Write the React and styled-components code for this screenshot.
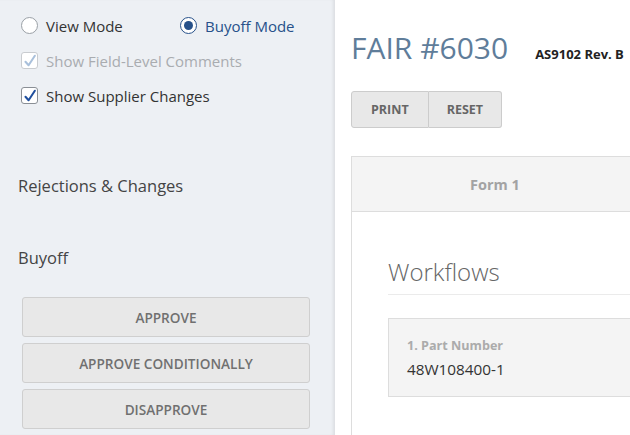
import React from 'react';
import styled, { createGlobalStyle } from 'styled-components';

const GlobalStyle = createGlobalStyle`
  html, body {
    margin: 0;
    padding: 0;
    overflow: hidden;
    background: #fff;
    font-family: "Open Sans", "Noto Sans", sans-serif;
  }
`;

const Page = styled.div`
  display: flex;
  width: 630px;
  height: 435px;
  overflow: hidden;
`;

const Sidebar = styled.aside`
  flex: 0 0 334px;
  background: #edf0f4;
  box-shadow: inset -3px 0 3px -1px rgba(0, 0, 0, 0.07);
  padding: 8px 25px 0 21px;
  box-sizing: border-box;
  color: #333;
`;

const Row = styled.div`
  display: flex;
  align-items: center;
  height: 35px;
`;

const Option = styled.label`
  display: flex;
  align-items: center;
  gap: 8px;
  width: ${(p) => p.width || 'auto'};
  font-size: 15px;
  color: ${(p) => (p.disabled ? '#a9acb0' : p.active ? '#27518a' : '#333')};
`;

const RadioDot = styled.span`
  box-sizing: border-box;
  width: 17px;
  height: 17px;
  border-radius: 50%;
  background: #fff;
  border: 1.5px solid ${(p) => (p.checked ? '#27518a' : '#9aa0a6')};
  display: flex;
  align-items: center;
  justify-content: center;

  &::after {
    content: '';
    display: ${(p) => (p.checked ? 'block' : 'none')};
    width: 9px;
    height: 9px;
    border-radius: 50%;
    background: #27518a;
  }
`;

const Box = styled.span`
  box-sizing: border-box;
  width: 17px;
  height: 17px;
  border-radius: 3px;
  background: #fff;
  border: 1px solid ${(p) => (p.disabled ? '#c9ccd0' : '#8a8f95')};
  display: flex;
  align-items: center;
  justify-content: center;
`;

const SectionLabel = styled.div`
  font-size: 16.5px;
  color: #444;
  line-height: 40px;
  margin-left: -3px;
  margin-top: ${(p) => p.top}px;
`;

const ActionStack = styled.div`
  display: flex;
  flex-direction: column;
  gap: 6px;
  margin-top: 19px;
  margin-left: 1px;
`;

const ActionButton = styled.button`
  height: 40px;
  width: 288px;
  box-sizing: border-box;
  background: #e8e8e8;
  border: 1px solid #cfcfcf;
  border-radius: 3px;
  font-family: "Open Sans", sans-serif;
  font-size: 13.6px;
  font-weight: 600;
  color: #707070;
  padding: 0;
`;

const Main = styled.main`
  flex: 1;
  padding: 25px 0 0 16px;
  min-width: 0;
`;

const TitleRow = styled.div`
  display: flex;
  align-items: baseline;
  gap: 27px;
  height: 46px;
  line-height: 46px;
  white-space: nowrap;
`;

const Title = styled.h1`
  margin: 0;
  font-size: 30px;
  font-weight: 400;
  color: #5f7d9a;
`;

const Standard = styled.span`
  font-size: 13px;
  font-weight: 700;
  color: #222;
`;

const Toolbar = styled.div`
  display: flex;
  margin-top: 20px;
`;

const ToolButton = styled.button`
  height: 37px;
  padding: 0 ${(p) => p.pad}px;
  background: #e8e8e8;
  border: 1px solid #cccccc;
  border-left-width: ${(p) => (p.joined ? 0 : 1)}px;
  border-radius: ${(p) => (p.joined ? '0 3px 3px 0' : '3px 0 0 3px')};
  font-family: "Open Sans", sans-serif;
  font-size: 12.5px;
  font-weight: 700;
  color: #666;
`;

const Panel = styled.section`
  margin-top: 28px;
  border: 1px solid #dddddd;
  border-right: none;
  height: 400px;
`;

const Tabs = styled.div`
  display: flex;
  height: 54px;
  background: #f4f4f4;
  border-bottom: 1px solid #dddddd;
`;

const Tab = styled.div`
  flex: 0 0 286px;
  display: flex;
  align-items: center;
  justify-content: center;
  font-size: 14.5px;
  font-weight: 700;
  color: #a3a3a3;
`;

const PanelBody = styled.div`
  padding: 47px 0 0 36px;
`;

const SectionTitle = styled.h2`
  margin: 0;
  font-size: 24px;
  font-weight: 300;
  line-height: 26px;
  color: #666;
  padding-bottom: 9px;
  border-bottom: 1px solid #ebebeb;
`;

const Field = styled.div`
  margin-top: 23px;
  height: 79px;
  box-sizing: border-box;
  background: #f4f4f4;
  border: 1px solid #dddddd;
  border-right: none;
  padding: 17px 0 0 18px;
`;

const FieldLabel = styled.div`
  font-size: 12.6px;
  font-weight: 700;
  color: #ababab;
  line-height: 20px;
`;

const FieldValue = styled.div`
  font-size: 15.3px;
  color: #333;
  line-height: 24px;
  margin-top: 1px;
`;

const Check = ({ color }) => (
  <svg width="14" height="14" viewBox="0 0 13 13">
    <path d="M2.3 7.2 L5.2 10.4 L11 1.6" fill="none" stroke={color} strokeWidth="1.9" strokeLinecap="round" strokeLinejoin="round" />
  </svg>
);

export default function App() {
  return (
    <Page>
      <GlobalStyle />
      <Sidebar>
        <Row>
          <Option width="159px">
            <RadioDot />
            View Mode
          </Option>
          <Option active>
            <RadioDot checked />
            Buyoff Mode
          </Option>
        </Row>
        <Row>
          <Option disabled>
            <Box disabled>
              <Check color="#a9c0db" />
            </Box>
            Show Field-Level Comments
          </Option>
        </Row>
        <Row>
          <Option>
            <Box>
              <Check color="#1f4f9e" />
            </Box>
            Show Supplier Changes
          </Option>
        </Row>
        <SectionLabel top={53}>Rejections &amp; Changes</SectionLabel>
        <SectionLabel top={32}>Buyoff</SectionLabel>
        <ActionStack>
          <ActionButton>APPROVE</ActionButton>
          <ActionButton>APPROVE CONDITIONALLY</ActionButton>
          <ActionButton>DISAPPROVE</ActionButton>
        </ActionStack>
      </Sidebar>
      <Main>
        <TitleRow>
          <Title>FAIR #6030</Title>
          <Standard>AS9102 Rev. B</Standard>
        </TitleRow>
        <Toolbar>
          <ToolButton pad={19}>PRINT</ToolButton>
          <ToolButton pad={18} joined>RESET</ToolButton>
        </Toolbar>
        <Panel>
          <Tabs>
            <Tab>Form 1</Tab>
          </Tabs>
          <PanelBody>
            <SectionTitle>Workflows</SectionTitle>
            <Field>
              <FieldLabel>1. Part Number</FieldLabel>
              <FieldValue>48W108400-1</FieldValue>
            </Field>
          </PanelBody>
        </Panel>
      </Main>
    </Page>
  );
}
